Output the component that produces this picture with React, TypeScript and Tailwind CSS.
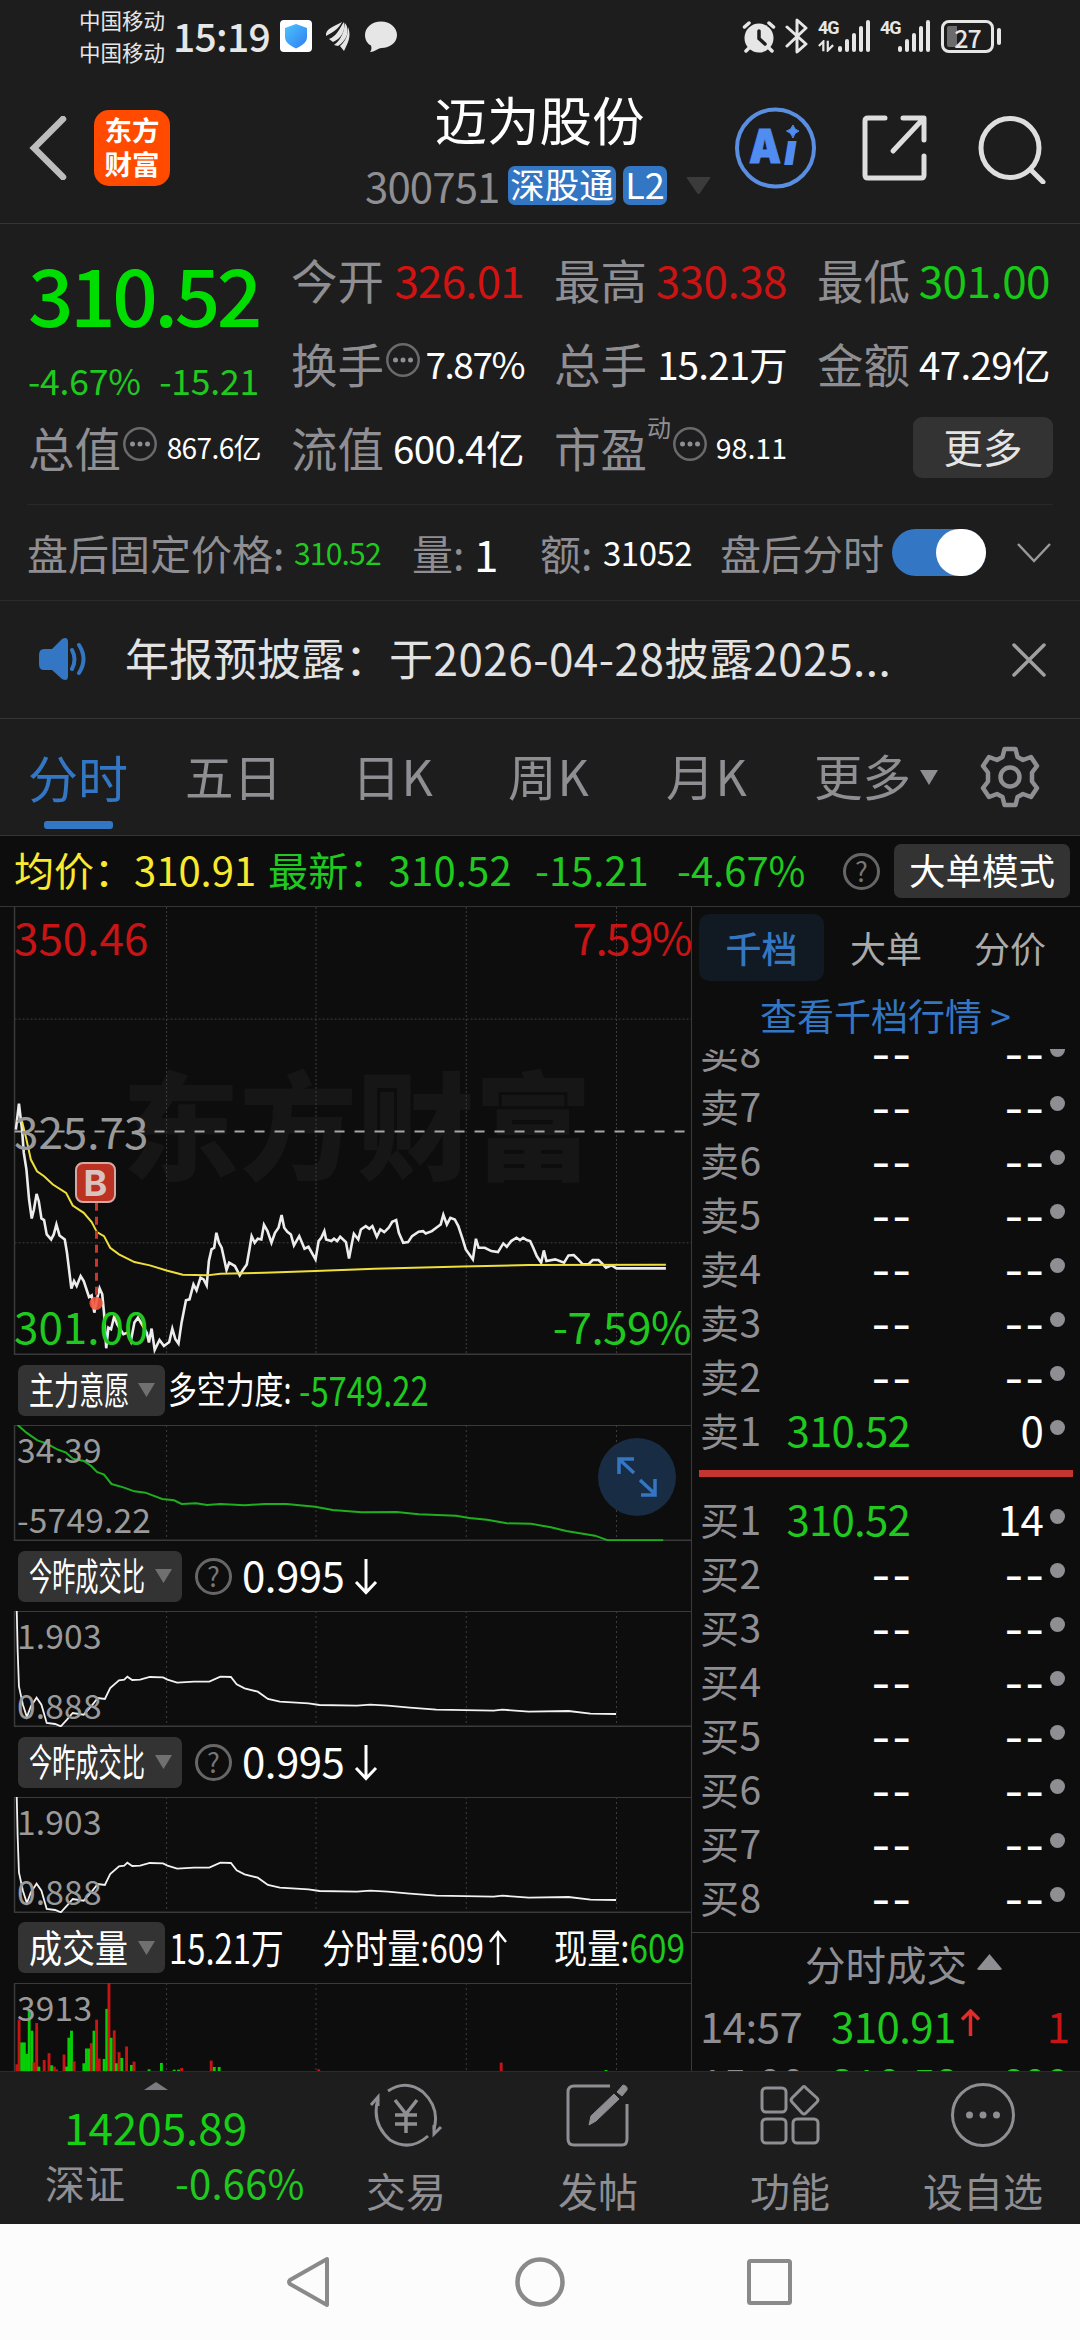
import React from "react";
import clsx from "clsx";

type BookRow = {
  label: string;
  price: string;
  volume: string;
};

type VolumeBar = [x: number, top: number, up: boolean];

const SELL_ROWS: BookRow[] = [
  { label: "卖8", price: "--", volume: "--" },
  { label: "卖7", price: "--", volume: "--" },
  { label: "卖6", price: "--", volume: "--" },
  { label: "卖5", price: "--", volume: "--" },
  { label: "卖4", price: "--", volume: "--" },
  { label: "卖3", price: "--", volume: "--" },
  { label: "卖2", price: "--", volume: "--" },
  { label: "卖1", price: "310.52", volume: "0" },
];

const BUY_ROWS: BookRow[] = [
  { label: "买1", price: "310.52", volume: "14" },
  { label: "买2", price: "--", volume: "--" },
  { label: "买3", price: "--", volume: "--" },
  { label: "买4", price: "--", volume: "--" },
  { label: "买5", price: "--", volume: "--" },
  { label: "买6", price: "--", volume: "--" },
  { label: "买7", price: "--", volume: "--" },
  { label: "买8", price: "--", volume: "--" },
];

const GRID_X = [378, 717, 1058, 1399];

const PRICE_LINE =
  "36,690 43,612 50,690 54,760 60,810 66,900 72,957 77,930 83,883 88,905 94,957 100,962 106,1005 116,1020 122,1005 128,975 135,1008 147,1020 152,1060 162,1168 168,1145 174,1160 183,1130 190,1145 202,1193 208,1188 214,1240 220,1200 226,1167 232,1185 236,1240 241,1347 246,1285 252,1290 259,1252 266,1275 280,1305 290,1300 297,1325 305,1270 313,1255 322,1275 333,1300 338,1330 344,1288 351,1352 362,1322 372,1340 384,1328 391,1288 398,1320 405,1333 412,1270 422,1203 430,1200 439,1155 446,1173 455,1135 462,1140 469,1158 474,1085 480,1050 486,1045 491,1000 497,1030 503,1045 508,1075 514,1112 520,1090 533,1100 544,1128 552,1110 560,1095 566,1050 571,1010 578,1030 585,1018 593,1020 599,976 607,995 616,1030 624,1000 632,985 639,947 645,985 652,997 660,1005 667,1038 679,1010 691,1048 700,1042 716,1080 723,1025 729,1015 736,995 740,1020 752,1025 758,1018 765,1025 772,1012 785,1028 792,1077 798,1035 803,1003 813,1020 819,990 830,980 838,988 845,980 855,1012 863,990 872,998 882,985 890,967 899,962 905,1000 915,1030 926,1028 935,1010 950,997 960,995 966,1002 980,995 990,985 1000,975 1006,946 1014,975 1022,955 1032,960 1040,980 1050,1020 1057,1050 1073,1080 1080,1018 1086,1045 1100,1045 1115,1055 1130,1058 1142,1032 1150,1042 1160,1025 1172,1015 1180,1022 1187,1015 1195,1022 1203,1025 1210,1045 1218,1070 1228,1090 1234,1053 1240,1085 1260,1080 1280,1090 1290,1068 1302,1067 1312,1080 1322,1094 1335,1095 1345,1082 1358,1082 1366,1092 1375,1105 1388,1098 1399,1107 1511,1107";

const AVERAGE_LINE =
  "50,665 60,720 70,780 84,815 100,830 120,855 150,880 165,918 190,940 208,968 220,998 236,1010 250,1045 270,1065 305,1088 340,1098 380,1114 415,1126 470,1128 500,1123 600,1120 716,1115 850,1108 1050,1101 1200,1097 1511,1096";

const FORCE_LINE =
  "40,197 60,220 85,243 105,252 130,270 150,280 165,298 190,305 207,320 220,338 236,346 253,374 280,384 305,396 330,400 368,419 395,423 412,434 445,432 470,437 500,434 555,438 600,434 650,434 715,442 755,452 820,459 900,458 950,465 1035,469 1065,476 1105,481 1150,492 1205,493 1250,504 1285,515 1350,529 1380,543 1505,543";

const RATIO_LINE =
  "38,754 40,870 43,980 52,1035 61,1072 70,1040 83,1014 94,1035 106,1090 125,1093 138,1100 152,1080 165,1060 190,1065 210,1035 222,1015 238,1018 250,985 270,962 282,960 289,951 300,961 318,960 340,952 370,953 380,960 402,969 440,966 475,966 500,951 524,952 537,974 555,986 585,996 608,1018 635,1026 700,1031 725,1036 810,1038 840,1035 880,1038 930,1044 990,1050 1120,1053 1140,1050 1200,1056 1290,1054 1340,1062 1398,1063";

const VOLUME_BARS: VolumeBar[] = [
  [38, 1003, true], [43, 870, true], [49, 938, false], [55, 938, false], [60, 972, false],
  [66, 840, false], [72, 903, false], [77, 997, true], [83, 880, true], [88, 1010, false],
  [100, 990, true], [111, 970, true], [117, 1006, false], [123, 1010, true], [128, 1018, true],
  [145, 974, true], [151, 1010, false], [156, 924, false], [162, 903, false], [168, 994, true],
  [190, 1000, false], [196, 956, false], [202, 956, false], [207, 940, true], [213, 903, false],
  [219, 870, true], [225, 986, true], [236, 987, false], [242, 838, false], [247, 761, true],
  [252, 924, false], [259, 902, true], [264, 1000, false], [270, 967, true], [276, 984, false],
  [287, 950, true], [298, 1005, false], [304, 995, true], [338, 1018, false], [366, 999, false],
  [395, 1019, false], [405, 1019, false], [412, 1014, true], [479, 992, true], [486, 1011, false],
  [497, 1011, false], [723, 1018, true], [1137, 998, true], [1375, 1020, false],
];

function SignalBars() {
  return (
    <svg className="w-[34px] h-[34px]" viewBox="0 0 34 34" fill="#e6e6e6">
      <rect x="0" y="27" width="4" height="6" rx="2" />
      <rect x="7" y="20" width="4" height="13" rx="2" />
      <rect x="14" y="14" width="4" height="19" rx="2" />
      <rect x="21" y="7" width="4" height="26" rx="2" />
      <rect x="28" y="1" width="4" height="32" rx="2" />
    </svg>
  );
}

function StatusBar() {
  return (
    <div className="flex h-[73px] shrink-0 items-start pl-[79px] text-[#e6e6e6]">
      <div className="w-[94px] pt-[4px] text-[21.5px] leading-[32px]">
        <div>中国移动</div>
        <div>中国移动</div>
      </div>
      <div className="w-[107px] pt-[15px] text-[39px] leading-[40px] font-medium tracking-[-0.700px]">15:19</div>
      <svg className="mt-[20px] h-[32px] w-[32px]" viewBox="0 0 32 32">
        <defs>
          <linearGradient id="shield" x1="0" x2="1" y1="0" y2="1">
            <stop offset="0" stopColor="#4cc4fa" />
            <stop offset="1" stopColor="#2f7df2" />
          </linearGradient>
        </defs>
        <rect width="32" height="32" rx="4" fill="#fff" />
        <path d="M16 4 L27 8 V17 C27 23 21 26 16 28.500 C11 26 5 23 5 17 V8Z" fill="url(#shield)" />
      </svg>
      <svg className="mt-[21px] ml-[13px] h-[31px] w-[26px]" viewBox="0 0 26 31" fill="#e6e6e6">
        <path d="M1 15 C0 8 8 6 17 1 C13 8 10 10 1 15Z" />
        <path d="M4 18 C12 15 14 8 19 1 C21 9 16 18 8 21Z" />
        <path d="M9 24 C17 18 19 10 20 2 C26 10 21 20 13 25Z" />
        <path d="M15 25 C22 19 23 12 23 6 C27 16 22 23 19 30Z" />
      </svg>
      <svg className="mt-[20px] ml-[13px] h-[33px] w-[34px]" viewBox="0 0 34 33" fill="#e6e6e6">
        <path d="M17 1.500 C26 1.500 33 7.500 33 15 C33 22.500 26 28 17.500 28 C14 28 12 31.500 6 32 C8 29.500 7.500 27.500 7 25.500 C3 23.500 1 19.500 1 15 C1 7.500 8 1.500 17 1.500Z" />
      </svg>
      <svg className="mt-[19px] ml-[343px] h-[35px] w-[36px]" viewBox="0 0 36 35" fill="none">
        <circle cx="18" cy="19" r="14.500" fill="#e6e6e6" />
        <path d="M3.500 8 L8 4 M32.500 8 L28 4 M8 29 L5 32 M28 29 L31 32" stroke="#e6e6e6" strokeWidth="3.500" strokeLinecap="round" />
        <path d="M18 12 V19.500 L24 25" stroke="#1d1d1d" strokeWidth="3.500" strokeLinecap="round" />
      </svg>
      <svg className="mt-[18px] ml-[8px] h-[36px] w-[24px]" viewBox="0 0 24 36" fill="none">
        <path d="M2 9 L21 26 L12 34 V2 L21 10 L2 28" stroke="#e6e6e6" strokeWidth="3" strokeLinejoin="round" strokeLinecap="round" />
      </svg>
      <div className="mt-[19px] ml-[9px] flex h-[34px] w-[20px] flex-col">
        <span className="font-[Roboto] text-[18px] leading-[18px] font-bold tracking-[-1px]">4G</span>
        <svg className="mt-[3px] h-[12px] w-[16px]" viewBox="0 0 18 12" fill="none" stroke="#e6e6e6" strokeWidth="2.500">
          <path d="M1 6 L6 1 V12 M11 0 V11 L17 5" />
        </svg>
      </div>
      <div className="mt-[19px]"><SignalBars /></div>
      <div className="mt-[19px] ml-[8px] w-[18px] font-[Roboto] text-[18px] leading-[18px] font-bold tracking-[-1px]">4G</div>
      <div className="mt-[19px]"><SignalBars /></div>
      <div className="relative mt-[20px] ml-[9px] flex h-[33px] w-[53px] items-center justify-center rounded-[8px] border-[3px] border-[#e6e6e6] bg-[linear-gradient(90deg,#6b6b6b_13px,transparent_13px)] bg-clip-content p-[3px]">
        <span className="text-[25px] leading-[24px] font-medium tracking-[-1px]">27</span>
      </div>
      <div className="mt-[28px] ml-[3px] h-[17px] w-[4px] rounded-full bg-[#e6e6e6]" />
    </div>
  );
}

function Header() {
  return (
    <header className="flex h-[151px] shrink-0 items-start border-b border-[#343434]">
      <svg className="mt-[43px] ml-[29px] h-[64px] w-[38px]" viewBox="0 0 38 64" fill="none" stroke="#bdbdbd" strokeWidth="6.500">
        <path d="M34 3 L5 32 L34 61" strokeLinecap="round" />
      </svg>
      <div className="mt-[37px] ml-[27px] flex h-[76px] w-[76px] flex-col items-center rounded-[15px] bg-[#ff4a00] pt-[2px] text-[27.500px] leading-[34px] font-bold text-white">
        <span>东方</span>
        <span>财富</span>
      </div>
      <div className="ml-[195px] flex w-[349px] flex-col items-center">
        <div className="mt-[15px] text-[52.500px] leading-[60px] text-white">迈为股份</div>
        <div className="mt-[16px] flex w-full items-center">
          <span className="w-[143px] text-[42px] leading-[42px] tracking-[-0.900px] text-[#8e8e93]">300751</span>
          <span className="flex h-[39px] w-[108px] items-center justify-center rounded-[7px] bg-[#3377c4] pb-[3px] text-[34.500px] text-white">深股通</span>
          <span className="ml-[7px] flex h-[39px] w-[44px] items-center justify-center rounded-[7px] bg-[#3377c4] pb-[4px] text-[36px] text-white">L2</span>
          <svg className="mt-[1px] ml-[19px] h-[17px] w-[25px]" viewBox="0 0 25 17" fill="#3b3b3b">
            <path d="M1.500 0 H23.500 Q25 0 24 1.500 L14 16 Q12.500 18 11 16 L1 1.500 Q0 0 1.500 0Z" />
          </svg>
        </div>
      </div>
      <svg className="mt-[33px] ml-[19px] h-[84px] w-[84px]" viewBox="0 0 84 84">
        <circle cx="42.500" cy="42" r="38.500" fill="none" stroke="#5a8ee0" strokeWidth="4" />
        <text x="16" y="57" fontFamily="Inter" fontSize="47" fontWeight="900" fill="#518df0" stroke="#518df0" textLength="32" lengthAdjust="spacingAndGlyphs">A</text>
        <text x="51" y="59" fontFamily="Inter" fontSize="43" fontWeight="900" fontStyle="italic" fill="#518df0" textLength="14">ı</text>
        <path d="M60 19 Q61 24 66 25 Q61 26.500 60 32 Q58.500 26.500 53.500 25 Q58.500 24 60 19Z" fill="#518df0" stroke="#518df0" />
      </svg>
      <svg className="mt-[41px] ml-[44px] h-[68px] w-[68px]" viewBox="0 0 68 68" fill="none" stroke="#dedede" strokeWidth="5" strokeLinecap="round" strokeLinejoin="round">
        <path d="M24 4 H7 Q4 4 4 7 V61 Q4 64 7 64 H60 Q63 64 63 61 V42" />
        <path d="M42 4 H63 V26 M62 5 L32 37" />
      </svg>
      <svg className="mt-[41px] ml-[47px] h-[70px] w-[72px]" viewBox="0 0 72 70" fill="none" stroke="#dedede" strokeWidth="5" strokeLinecap="round">
        <ellipse cx="34" cy="34" rx="29" ry="29.500" />
        <path d="M55 56 L67 68" />
      </svg>
    </header>
  );
}

function MoreDots() {
  return (
    <svg className="mb-[6px] ml-px h-[36px] w-[36px] shrink-0" viewBox="0 0 36 36">
      <circle cx="18" cy="18" r="15.700" fill="none" stroke="#6a6a6d" strokeWidth="2.500" />
      <circle cx="10.500" cy="18" r="2.500" fill="#8e8e93" />
      <circle cx="18" cy="18" r="2.500" fill="#8e8e93" />
      <circle cx="25.500" cy="18" r="2.500" fill="#8e8e93" />
    </svg>
  );
}

function Stat({
  label,
  value,
  valueClass,
  hint,
  sup,
}: {
  label: string;
  value: string;
  valueClass: string;
  hint?: boolean;
  sup?: string;
}) {
  return (
    <div className="flex h-[84px] items-center whitespace-nowrap">
      <span className="shrink-0 text-[46.500px] leading-[60px] text-[#8e8e93]">{label}</span>
      {sup && <span className="mb-[40px] text-[24px] leading-[24px] text-[#8e8e93]">{sup}</span>}
      {hint && <MoreDots />}
      <span className={clsx("ml-auto leading-[60px]", valueClass)}>{value}</span>
    </div>
  );
}

function QuotePanel() {
  return (
    <section className="mx-[27px] grid h-[281px] shrink-0 grid-cols-[233px_233px_233px_233px] gap-x-[30px] border-b border-[#282828] pt-[13px] pl-px">
      <div className="flex flex-col">
        <div className="mt-[11px] h-[88px] text-[80px] leading-[88px] font-medium tracking-[-3.500px] text-[#00dd00]">310.52</div>
        <div className="mt-[18px] flex h-[51px] justify-between pr-[2px] text-[35.500px] leading-[51px] tracking-[-0.200px] text-[#1fc91f]">
          <span>-4.67%</span>
          <span>-15.21</span>
        </div>
        <Stat label="总值" hint value="867.6亿" valueClass="text-[28px] text-white tracking-[-0.600px]" />
      </div>
      <div>
        <Stat label="今开" value="326.01" valueClass="text-[44px] text-[#d31212] tracking-[-0.800px]" />
        <Stat label="换手" hint value="7.87%" valueClass="text-[37px] text-white tracking-[-1.500px]" />
        <Stat label="流值" value="600.4亿" valueClass="text-[38.500px] text-white tracking-[-0.600px]" />
      </div>
      <div>
        <Stat label="最高" value="330.38" valueClass="text-[44px] text-[#c81414] tracking-[-0.500px]" />
        <Stat label="总手" value="15.21万" valueClass="text-[38.500px] text-white tracking-[-0.800px]" />
        <Stat label="市盈" sup="动" hint value="98.11" valueClass="text-[28.500px] text-white" />
      </div>
      <div>
        <Stat label="最低" value="301.00" valueClass="text-[44px] text-[#16c916] tracking-[-0.500px]" />
        <Stat label="金额" value="47.29亿" valueClass="text-[38.500px] text-white tracking-[-0.600px]" />
        <div className="-mr-[3px] ml-auto mt-[12px] flex h-[61px] w-[140px] items-center justify-center rounded-[9px] bg-[#333] pb-[3px] text-[39.500px] text-[#e4e4e4]">
          更多
        </div>
      </div>
    </section>
  );
}

function AfterHours() {
  return (
    <section className="flex h-[96px] shrink-0 items-center border-b border-[#2a2a2a] pl-[27px] whitespace-nowrap text-[#8e8e93]">
      <span className="w-[267px] text-[41px]">盘后固定价格:</span>
      <span className="w-[118px] text-[30px] tracking-[-0.800px] text-[#1fc91f]">310.52</span>
      <span className="w-[62px] text-[41px]">量:</span>
      <span className="w-[66px] text-[44px] leading-[50px] text-white">1</span>
      <span className="w-[63px] text-[41px]">额:</span>
      <span className="w-[117px] text-[33px] tracking-[-0.500px] text-white">31052</span>
      <span className="w-[172px] text-[41px]">盘后分时</span>
      <div className="flex h-[47px] w-[94px] justify-end rounded-full bg-[#3377c4]">
        <div className="h-[47px] w-[50px] rounded-full bg-white" />
      </div>
      <svg className="ml-[31px] h-[22px] w-[34px]" viewBox="0 0 34 22" fill="none" stroke="#999" strokeWidth="2.500">
        <path d="M1 2 L17 19 L33 2" />
      </svg>
    </section>
  );
}

function Notice() {
  return (
    <section className="flex h-[118px] shrink-0 items-center border-b border-[#343434] pl-[38px]">
      <svg className="mb-[2px] h-[44px] w-[52px]" viewBox="0 0 52 44" fill="#3377c4">
        <path d="M6 12 H14 L24 2 Q30 -1 30 5 V39 Q30 45 24 42 L14 33 H6 Q1 33 1 27 V18 Q1 12 6 12Z" />
        <path d="M34 13 Q39 22 34 32 M41 8 Q50 22 41 36" fill="none" stroke="#3377c4" strokeWidth="4" strokeLinecap="round" />
      </svg>
      <p className="mb-[5px] ml-[35px] w-[887px] text-[44px] leading-[60px] whitespace-nowrap text-[#e2e2e2]">
        年报预披露：<span className="tracking-[0.500px]">于2026-04-28披露2025...</span>
      </p>
      <svg className="h-[34px] w-[34px]" viewBox="0 0 34 34" stroke="#a0a0a0" strokeWidth="3.500" strokeLinecap="round">
        <path d="M2 2 L32 32 M32 2 L2 32" />
      </svg>
    </section>
  );
}

function PeriodTabs() {
  return (
    <nav className="flex h-[117px] shrink-0 items-center border-b border-[#343434] pl-[28px] text-[48.500px] leading-[60px] whitespace-nowrap text-[#8e8e93]">
      <div className="flex w-[157px] flex-col text-[50px] text-[#3377c4]">
        <span className="mt-[20px]">分时</span>
        <span className="mt-[15px] ml-[16px] h-[8px] w-[69px] rounded-[3px] bg-[#3377c4]" />
      </div>
      <span className="w-[167px] pb-[5px]">五日</span>
      <span className="w-[156px] pb-[5px] tracking-[1px]">日K</span>
      <span className="w-[158px] pb-[5px] tracking-[1px]">周K</span>
      <span className="w-[148px] pb-[5px] tracking-[1px]">月K</span>
      <span className="pb-[5px]">更多</span>
      <svg className="ml-[9px] h-[15px] w-[18px]" viewBox="0 0 18 15" fill="#8e8e93">
        <path d="M0 0 H18 L9 15Z" />
      </svg>
      <svg className="ml-[42px] h-[62px] w-[60px]" viewBox="0 0 60 62" fill="none" stroke="#8e8e93" strokeWidth="4.500" strokeLinejoin="round">
        <path d="M24.500 3 H35.500 L37.500 11 L43 14 L51 11 L57 20 L52 26.500 V35.500 L57 42 L51 51 L43 48 L37.500 51 L35.500 59 H24.500 L22.500 51 L17 48 L9 51 L3 42 L8 35.500 V26.500 L3 20 L9 11 L17 14 L22.500 11Z" />
        <circle cx="30" cy="31" r="9.500" />
      </svg>
    </nav>
  );
}

function Help() {
  return (
    <div className="flex h-[37px] w-[37px] shrink-0 items-center justify-center rounded-full border-[3px] border-[#666] pb-px text-[27px] leading-[30px] text-[#777]">
      ?
    </div>
  );
}

function AverageBar() {
  return (
    <div className="flex h-[71px] shrink-0 items-center border-b border-[#343434] bg-[#0d0d0d] pl-[14px] text-[40px] leading-[60px] whitespace-nowrap text-[#1fc91f]">
      <span className="w-[254px] pb-[4px] text-[#fbe92d]">均价：310.91</span>
      <span className="w-[267px] pb-[4px] tracking-[0.200px]">最新：310.52</span>
      <span className="w-[142px] pb-[4px]">-15.21</span>
      <span className="w-[166px] pb-[4px]">-4.67%</span>
      <Help />
      <div className="ml-[14px] flex h-[54px] w-[176px] items-center justify-center rounded-[7px] bg-[#333] pb-[3px] text-[36.500px] text-white">大单模式</div>
    </div>
  );
}

function MainChart() {
  return (
    <div className="relative h-[449px] w-[691px] overflow-hidden">
      <div className="absolute top-[138px] left-[122px] text-[117.500px] leading-[150px] font-black text-[#161616]">东方财富</div>
      <svg className="absolute inset-0 h-full w-full" viewBox="0 21 1568 1347" preserveAspectRatio="none" fill="none">
        <g stroke="#3d3d3d" strokeWidth="1" strokeDasharray="2 2">
          {GRID_X.map((x) => (
            <path key={x} d={`M${x} 21 V1365`} vectorEffect="non-scaling-stroke" />
          ))}
          <path d="M33 358 H1568 M33 1030 H1568" vectorEffect="non-scaling-stroke" />
        </g>
        <path d="M33 21 V1365 H1568" stroke="#3a3a3a" strokeWidth="1.500" vectorEffect="non-scaling-stroke" />
        <path d="M33 696 H1560" stroke="#a6a6a6" strokeWidth="2" strokeDasharray="10 10" vectorEffect="non-scaling-stroke" />
        <polyline points={PRICE_LINE} stroke="#ededed" strokeWidth="2.600" vectorEffect="non-scaling-stroke" />
        <polyline points={AVERAGE_LINE} stroke="#eedf3c" strokeWidth="2" vectorEffect="non-scaling-stroke" />
        <path d="M219 910 V1200" stroke="#c9362b" strokeWidth="3" strokeDasharray="8 6" vectorEffect="non-scaling-stroke" />
        <ellipse cx="218" cy="1212" rx="15" ry="20" fill="#f4583f" fillOpacity="0.9" />
      </svg>
      <div className="absolute top-[255px] left-[75px] flex h-[41px] w-[41px] items-center justify-center rounded-[8px] border-2 border-[#d3a9a4] bg-[#bb3222] font-[Inter] text-[36px] leading-[36px] font-bold text-[#d9c2c0]">
        B
      </div>
      <div className="absolute inset-0 text-[44px] leading-[50px]">
        <span className="absolute top-[4px] left-[14px] text-[#c81414]">350.46</span>
        <span className="absolute top-[4px] right-0 tracking-[-1.500px] text-[#c81414]">7.59%</span>
        <span className="absolute top-[198px] left-[14px] text-[#9a9a9a]">325.73</span>
        <span className="absolute top-[393px] left-[14px] text-[#1fc91f]">301.00</span>
        <span className="absolute top-[393px] right-0 tracking-[-0.500px] text-[#1fc91f]">-7.59%</span>
      </div>
    </div>
  );
}

function SubChart({
  viewBox,
  height,
  top,
  bottom,
  children,
}: {
  viewBox: string;
  height: string;
  top: string;
  bottom?: string;
  children: React.ReactNode;
}) {
  const [, y, , h] = viewBox.split(" ").map(Number);
  return (
    <div className={clsx("relative w-[691px] shrink-0", height)}>
      <svg className="absolute inset-0 h-full w-full" viewBox={viewBox} preserveAspectRatio="none" fill="none">
        {GRID_X.map((x) => (
          <path key={x} d={`M${x} ${y} V${y + h}`} stroke="#3d3d3d" strokeDasharray="2 3" vectorEffect="non-scaling-stroke" />
        ))}
        <path d={`M33 ${y + 1} H1568 M33 ${y} V${y + h}`} stroke="#3a3a3a" strokeWidth="1.500" vectorEffect="non-scaling-stroke" />
        {bottom && <path d={`M33 ${y + h - 2} H1568`} stroke="#3a3a3a" strokeWidth="1.500" vectorEffect="non-scaling-stroke" />}
        {children}
      </svg>
      <div className="absolute inset-0 text-[33.500px] leading-[36px] tracking-[0.200px] text-[#9a9a9a]">
        <span className="absolute top-[6px] left-[17px]">{top}</span>
        {bottom && <span className="absolute top-[76px] left-[17px]">{bottom}</span>}
      </div>
    </div>
  );
}

// Indicator names are squeezed to fit the fixed-size picker.
function Picker({ className, textClass, name }: { className: string; textClass: string; name: string }) {
  return (
    <div className={clsx("flex h-[51px] shrink-0 items-center justify-between rounded-[7px] bg-[#333] pr-[10px] pl-[11px]", className)}>
      <span className="w-0 pb-[4px]">
        <span className={clsx("inline-block origin-left text-[38px] leading-[46px] whitespace-nowrap text-white", textClass)}>{name}</span>
      </span>
      <svg className="h-[14px] w-[17px]" viewBox="0 0 17 14" fill="#707070">
        <path d="M0 0 H17 L8.500 14Z" />
      </svg>
    </div>
  );
}

function RatioBlock() {
  return (
    <>
      <div className="flex h-[70px] items-center pl-[18px] text-white">
        <Picker className="w-[164px]" textClass="scale-x-[0.610]" name="今昨成交比" />
        <div className="ml-[13px]"><Help /></div>
        <span className="ml-[10px] pb-[5px] text-[42px] leading-[50px] tracking-[-0.500px]">0.995</span>
        <svg className="ml-[10px] h-[37px] w-[24px]" viewBox="0 0 24 37" fill="none" stroke="#fff" strokeWidth="3">
          <path d="M12 1 V34 M2 24 L12 34.500 L22 24" />
        </svg>
      </div>
      <SubChart viewBox="0 754 1568 348" height="h-[116px]" top="1.903" bottom="0.888">
        <polyline points={RATIO_LINE} stroke="#f2f2f2" strokeWidth="1.800" vectorEffect="non-scaling-stroke" />
      </SubChart>
    </>
  );
}

function ChartColumn() {
  return (
    <div className="flex w-[691px] shrink-0 flex-col overflow-hidden">
      <MainChart />
      <div className="flex h-[70px] shrink-0 items-center pl-[18px] whitespace-nowrap text-white">
        <Picker className="w-[147px]" textClass="scale-x-[0.660]" name="主力意愿" />
        <span className="ml-[3px] w-[131px] pb-[4px]">
          <span className="inline-block origin-left scale-x-[0.780] text-[37px] leading-[46px]">多空力度:</span>
        </span>
        <span className="pb-[4px]">
          <span className="inline-block origin-left scale-x-[0.800] text-[41px] leading-[46px] text-[#1fc91f]">-5749.22</span>
        </span>
      </div>
      <div className="relative">
        <SubChart viewBox="0 197 1568 348" height="h-[116px]" top="34.39" bottom="-5749.22">
          <polyline points={FORCE_LINE} stroke="#1fae1f" strokeWidth="2" vectorEffect="non-scaling-stroke" />
        </SubChart>
        <svg className="absolute top-[13px] left-[598px] h-[78px] w-[78px]" viewBox="0 0 78 78" fill="none">
          <circle cx="39" cy="39" r="39" fill="#182c43" />
          <path d="M36 21 H21 V36 M21.500 21.500 L36 35 M42 42 L57 56 M43 57 H57 V41" stroke="#3377c4" strokeWidth="3.500" />
        </svg>
      </div>
      <RatioBlock />
      <RatioBlock />
      <div className="flex h-[70px] shrink-0 items-center pl-[18px] whitespace-nowrap text-white">
        <Picker className="w-[147px]" textClass="scale-x-[0.870]" name="成交量" />
        <span className="ml-[4px] w-[153px] pb-[3px]">
          <span className="inline-block origin-left scale-x-[0.800] text-[41px] leading-[46px]">15.21万</span>
        </span>
        <span className="w-[232px] pb-[3px]">
          <span className="inline-block origin-left scale-x-[0.830] text-[39.500px] leading-[46px]">分时量:609</span>
          <svg className="-ml-[29px] inline-block h-[36px] w-[20px] align-[-2px]" viewBox="0 0 20 36" fill="none" stroke="#fff" strokeWidth="2.500">
            <path d="M10 36 V3 M2 13 L10 3 L18 13" />
          </svg>
        </span>
        <span className="pb-[3px]">
          <span className="inline-block w-0 origin-left scale-x-[0.840] text-[39.500px] leading-[46px]">
            现量:<span className="text-[#1fc91f]">609</span>
          </span>
        </span>
      </div>
      <SubChart viewBox="0 761 1568 262" height="h-[88px]" top="3913">
        {VOLUME_BARS.map(([x, y, up]) => (
          <rect key={x} x={x - 3} y={y} width="6.500" height={1023 - y} fill={up ? "#c81414" : "#06cf06"} />
        ))}
      </SubChart>
    </div>
  );
}

function Book({ rows }: { rows: BookRow[] }) {
  return (
    <>
      {rows.map((row) => (
        <div key={row.label} className="flex h-[54px] shrink-0 items-center pl-[8px] leading-[54px] whitespace-nowrap">
          <span className="w-[70px] text-[39px] tracking-[0.500px] text-[#8e8e93]">{row.label}</span>
          {[row.price, row.volume].map((value, i) => (
            <span key={i} className={clsx("flex justify-end", i === 0 ? "w-[140px]" : "w-[133px]")}>
              <span
                className={clsx(
                  value === "--" ? "-mr-[3px] origin-right scale-x-[1.250] text-[41px] tracking-[2px] font-medium" : "text-[42px] tracking-[-0.800px]",
                  value.includes(".") ? "text-[#1fc91f]" : "text-white",
                )}
              >
                {value}
              </span>
            </span>
          ))}
          <span className="mb-[3px] ml-[7px] h-[15px] w-[15px] rounded-full bg-[#8e8e93]" />
        </div>
      ))}
    </>
  );
}

function OrderBook() {
  return (
    <aside className="flex flex-1 flex-col overflow-hidden border-l border-[#3a3a3a]">
      <div className="mt-[7px] ml-[7px] flex h-[67px] shrink-0 text-[36px] leading-[66px] text-[#aaa]">
        <span className="w-[125px] rounded-[10px] bg-[#111922] text-center font-medium text-[#3377c4]">千档</span>
        <span className="w-[124px] text-center">大单</span>
        <span className="w-[124px] text-center">分价</span>
      </div>
      <div className="mt-[5px] h-[63px] shrink-0 pl-[68px] text-[37px] leading-[58px] whitespace-nowrap text-[#3377c4]">查看千档行情 &gt;</div>
      <div className="flex h-[410px] shrink-0 flex-col justify-end overflow-hidden pb-[3px]">
        <Book rows={SELL_ROWS} />
      </div>
      <div className="mt-[11px] mr-[7px] ml-[7px] h-[7px] shrink-0 bg-[#c43431]" />
      <div className="mt-[14px] h-[442px] shrink-0 border-b border-[#3a3a3a]">
        <Book rows={BUY_ROWS} />
      </div>
      <div className="flex h-[62px] shrink-0 items-center pl-[113px] text-[40.500px] leading-[60px] text-[#8e8e93]">
        <span>分时成交</span>
        <svg className="mb-[5px] ml-[10px] h-[16px] w-[25px]" viewBox="0 0 25 16" fill="#8e8e93">
          <path d="M12.500 0 L25 15 Q24 16 23 16 H2 Q1 16 0 15Z" />
        </svg>
      </div>
      <div className="flex h-[58px] shrink-0 items-center pt-px pl-[8px] text-[42px] leading-[58px] text-[#8e8e93]">
        <span className="w-[131px] tracking-[-0.500px]">14:57</span>
        <span className="tracking-[-0.600px] text-[#1fc91f]">310.91</span>
        <svg className="mb-[4px] ml-[5px] h-[27px] w-[19px]" viewBox="0 0 19 27" fill="none" stroke="#e22b2b" strokeWidth="3.500">
          <path d="M9.500 27 V2 M1 10.500 L9.500 2 L18 10.500" />
        </svg>
        <span className="mr-[10px] ml-auto text-[#c81414]">1</span>
      </div>
      <div className="flex h-[58px] shrink-0 items-center pl-[8px] text-[42px] leading-[58px] text-[#8e8e93]">
        <span className="w-[131px]">15:00</span>
        <span className="text-[#1fc91f]">310.52</span>
        <span className="mr-[10px] ml-auto text-[#1fc91f]">609</span>
      </div>
    </aside>
  );
}

function NavItem({ label, className, children }: { label: string; className: string; children: React.ReactNode }) {
  return (
    <div className={clsx("flex flex-col items-center", className)}>
      <svg className="mt-[6px] h-[76px] w-[80px]" viewBox="0 0 80 76" fill="none" stroke="#8e8e93" strokeWidth="3">
        {children}
      </svg>
      <span className="mt-[7px] text-[40px] leading-[58px]">{label}</span>
    </div>
  );
}

function BottomNav() {
  return (
    <footer className="flex h-[153px] shrink-0 border-t border-[#2c2c2c] bg-[#1d1d1d] text-[#8e8e93]">
      <div className="w-[340px] text-[#1fc91f]">
        <svg className="mt-[10px] ml-[144px] h-[8px] w-[24px]" viewBox="0 0 24 8" fill="#7c7c80">
          <path d="M12 0 L24 8 H0Z" />
        </svg>
        <div className="mt-[8px] ml-[64px] text-[44px] leading-[56px] text-[#16cf16]">14205.89</div>
        <div className="mt-px flex text-[40px] leading-[54px]">
          <span className="ml-[45px] w-[130px] text-[#8e8e93]">深证</span>
          <span className="tracking-[0.200px]">-0.66%</span>
        </div>
      </div>
      <NavItem label="交易" className="w-[132px]">
        <path d="M22 13 Q40 1 57 14 Q74 30 68 51 M62 58 Q44 74 24 62 Q5 45 12 21" />
        <path d="M5 27 L12 19 V28 M75 49 L68 56 V47" />
        <path d="M29 22 L40 36 L51 22 M40 36 V55 M29 37 H51 M29 46 H51" strokeWidth="3.500" />
      </NavItem>
      <NavItem label="发帖" className="ml-[60px] w-[132px]">
        <path d="M52 8 H16 Q10 8 10 14 V61 Q10 67 16 67 H64 Q69 67 69 61 V26" />
        <path d="M31 47 L33 38 L56 16 L61 21 L38 43Z" fill="#8e8e93" strokeWidth="1" />
        <path d="M59 14 L65 7 Q70 8 69 12 L64 18Z" fill="#8e8e93" strokeWidth="1" />
      </NavItem>
      <NavItem label="功能" className="ml-[60px] w-[132px]">
        <rect x="12" y="10" width="24" height="24" rx="4" />
        <path d="M52 10 Q54 7 56 10 L67 20 Q69 22 67 24 L56 35 Q54 37 52 35 L42 24 Q40 22 42 20Z" />
        <rect x="12" y="41" width="24" height="24" rx="4" />
        <rect x="43" y="41" width="25" height="24" rx="4" />
      </NavItem>
      <NavItem label="设自选" className="ml-[60px] w-[134px]">
        <circle cx="40" cy="37" r="30.500" />
        <g fill="#8e8e93" stroke="none">
          <circle cx="26.500" cy="37" r="3.500" />
          <circle cx="40" cy="37" r="3.500" />
          <circle cx="53.500" cy="37" r="3.500" />
        </g>
      </NavItem>
    </footer>
  );
}

function SystemNav() {
  return (
    <div className="flex h-[116px] shrink-0 items-center bg-[#fcfcfc] pl-[285px]">
      <svg className="h-[54px] w-[48px]" viewBox="0 0 48 54" fill="none" stroke="#8a8a8a" strokeWidth="4" strokeLinejoin="round">
        <path d="M42 4 V50 L5 29 Q3 27 5 25Z" />
      </svg>
      <svg className="ml-[181px] h-[52px] w-[52px]" viewBox="0 0 52 52" fill="none" stroke="#8a8a8a" strokeWidth="4.500">
        <circle cx="26" cy="26" r="22.500" />
      </svg>
      <svg className="ml-[179px] h-[50px] w-[50px]" viewBox="0 0 50 50" fill="none" stroke="#8a8a8a" strokeWidth="4">
        <rect x="4" y="4" width="41" height="42" rx="1.500" />
      </svg>
    </div>
  );
}

export default function App() {
  return (
    <div className="flex h-[2340px] w-[1080px] flex-col overflow-hidden bg-[#1d1d1d] font-['Noto_Sans_CJK_SC',sans-serif]">
      <StatusBar />
      <Header />
      <QuotePanel />
      <AfterHours />
      <Notice />
      <PeriodTabs />
      <AverageBar />
      <main className="flex h-[1164px] shrink-0 overflow-hidden bg-[#0d0d0d]">
        <ChartColumn />
        <OrderBook />
      </main>
      <BottomNav />
      <SystemNav />
    </div>
  );
}
